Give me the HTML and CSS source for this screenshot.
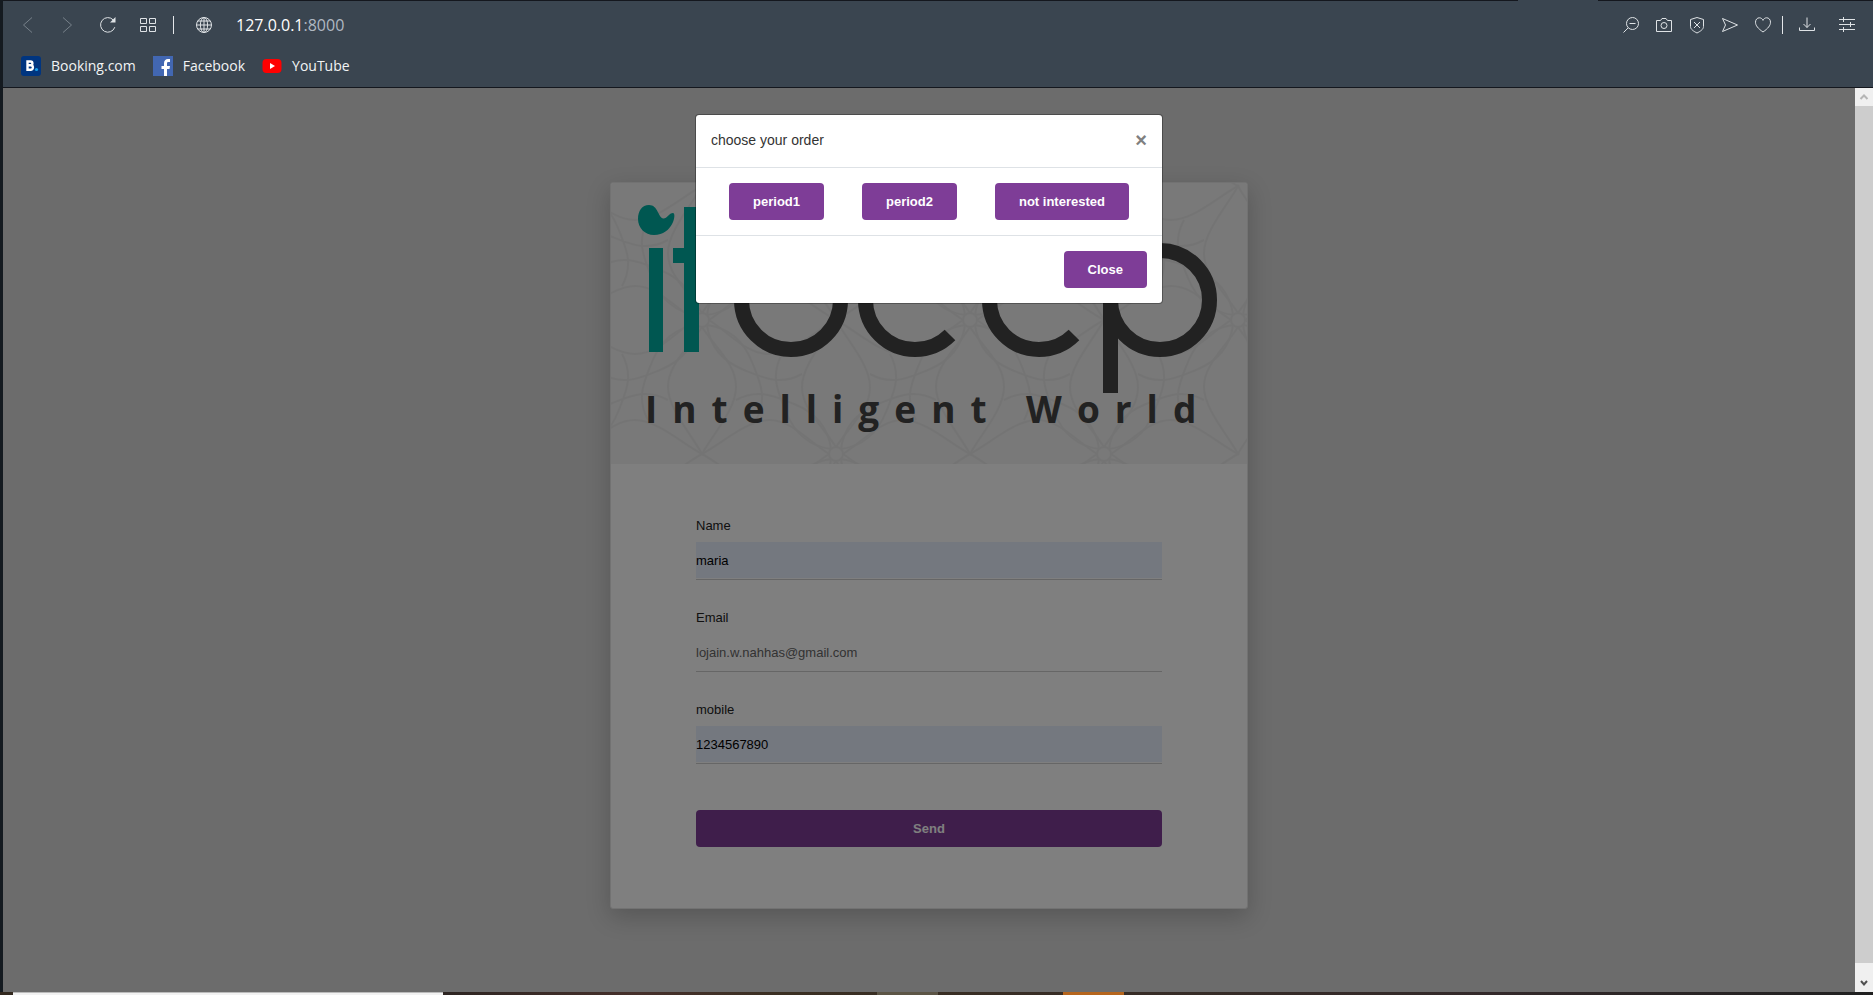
FILE: index.html
```html
<!DOCTYPE html>
<html lang="en">
<head>
<meta charset="utf-8">
<title>127.0.0.1:8000</title>
<link rel="stylesheet" href="styles.css">
</head>
<body>
<header class="chrome">
  <nav class="toolbar" aria-label="Browser">
    <div class="nav-group">
      <button class="icon-btn dim" aria-label="Back"><svg viewBox="0 0 16 16"><path d="M12 0.5L3.500 8l8.500 7.500"/></svg></button>
      <button class="icon-btn dim" aria-label="Forward"><svg viewBox="0 0 16 16"><path d="M3 .5L11.500 8 3 15.500"/></svg></button>
      <button class="icon-btn" aria-label="Reload"><svg viewBox="0 0 16 16"><path d="M14.800 10.200A7.300 7.300 0 1 1 13.300 3"/><path class="solid" d="M15.500 0v5.500H10z"/></svg></button>
      <button class="icon-btn" aria-label="Speed dial"><svg viewBox="0 0 16 16"><path d="M.5 1.500h6v5h-6zM9.500 1.500h6v5h-6zM.5 9.500h6v5h-6zM9.500 9.500h6v5h-6z"/></svg></button>
    </div>
    <span class="divider"></span>
    <div class="address">
      <button class="icon-btn" aria-label="Site information"><svg viewBox="0 0 16 16"><circle cx="8" cy="8" r="7.500"/><ellipse cx="8" cy="8" rx="3.600" ry="7.500"/><path d="M8 .5v15M.5 8h15M1.800 4h12.400M1.800 12h12.400"/></svg></button>
      <span class="url">127.0.0.1<span class="port">:8000</span></span>
    </div>
    <div class="tools">
      <button class="icon-btn" aria-label="Zoom out"><svg viewBox="0 0 16 16"><circle cx="9.500" cy="6.500" r="6"/><path d="M6.500 6.500h6M5.200 10.800L.5 15.500"/></svg></button>
      <button class="icon-btn" aria-label="Snapshot"><svg viewBox="0 0 16 16"><path d="M.5 3.500h4l1.500-2h4l1.500 2h4v11H.5z"/><circle cx="8" cy="8.500" r="3"/></svg></button>
      <button class="icon-btn" aria-label="Blocker"><svg viewBox="0 0 16 16"><path d="M8 .5l6.500 2v7c0 3-3.500 5-6.500 6.500C5 14.500 1.500 12.500 1.500 9.500v-7zM5 5l6 6M11 5l-6 6"/></svg></button>
      <button class="icon-btn" aria-label="Send to flow"><svg viewBox="0 0 16 16"><path d="M.5 1.500L15.500 8 .5 14.500 3.500 8z"/></svg></button>
      <button class="icon-btn" aria-label="Bookmark"><svg viewBox="0 0 16 16"><path d="M8 15C3 11.500.5 8.500.5 5.200.5 2.500 2.300.8 4.300.8 6 .8 7.400 1.800 8 3.400 8.600 1.800 10 .8 11.700.8c2 0 3.800 1.700 3.800 4.400C15.500 8.500 13 11.500 8 15z"/></svg></button>
    </div>
    <span class="divider"></span>
    <div class="menu-tools">
      <button class="icon-btn" aria-label="Downloads"><svg viewBox="0 0 16 16"><path d="M8 .5v10M4.500 7L8 10.500 11.500 7M.5 10.500v3h15v-3"/></svg></button>
      <button class="icon-btn" aria-label="Easy setup"><svg viewBox="0 0 16 16"><path d="M0 2.500h16M0 7.500h16M0 12.500h16M4.500 0v5M11.500 5v5M4.500 10v5"/></svg></button>
    </div>
  </nav>
  <nav class="bookmarks" aria-label="Bookmarks">
    <a href="#"><svg viewBox="0 0 20 20"><rect width="20" height="20" rx="3" fill="#003580"/><path d="M6.500 5.500h3a1.800 1.800 0 0 1 0 3.800h-3zM6.500 9.300h3.200a2.200 2.200 0 0 1 0 4.400H6.500z" fill="none" stroke="#fff" stroke-width="2.400"/><circle cx="15.500" cy="13.500" r="1.600" fill="#1ba0e8"/></svg>Booking.com</a>
    <a href="#"><svg viewBox="0 0 20 20"><rect width="20" height="20" fill="#4267b2"/><path d="M11 20v-7H8.500v-3H11V7.500C11 4.500 12.500 3 15 3h2v3h-1.500C14.200 6 14 6.700 14 7.600V10h3l-.5 3H14v7z" fill="#fff"/></svg>Facebook</a>
    <a href="#"><svg viewBox="0 0 20 20"><rect x=".5" y="3" width="19" height="14" rx="4" fill="#f00"/><path d="M8 7l5 3-5 3z" fill="#fff"/></svg>YouTube</a>
  </nav>
</header>

<div class="viewport">
  <div class="page">
    <main class="content">
      <section class="card">
        <svg class="banner" viewBox="0 0 636 281" role="img" aria-label="itoccp Intelligent World">
          <defs>
            <g id="flower">
              <circle r="7"/>
              <path d="M0-7C-15-30-34-45-34-67S-10-115 0-134C10-115 34-90 34-67S15-30 0-7"/>
              <path d="M0 7C-15 30-34 45-34 67S-10 115 0 134C10 115 34 90 34 67S15 30 0 7"/>
              <path d="M-7 0C-30-15-45-34-67-34S-115-10-134 0C-115 10-90 34-67 34S-30 15-7 0"/>
              <path d="M7 0C30-15 45-34 67-34S115-10 134 0C115 10 90 34 67 34S30 15 7 0"/>
              <path d="M5 5C8 28 22 42 42 50S78 66 100 54M5 5C28 8 42 22 50 42S66 78 54 100M-5 5C-8 28-22 42-42 50S-78 66-100 54M-5 5C-28 8-42 22-50 42S-66 78-54 100M5-5C8-28 22-42 42-50S78-66 100-54M5-5C28-8 42-22 50-42S66-78 54-100M-5-5C-8-28-22-42-42-50S-78-66-100-54M-5-5C-28-8-42-22-50-42S-66-78-54-100"/>
            </g>
          </defs>
          <rect width="636" height="281" fill="#f2f2f2"/>
          <g fill="none" stroke="#e9e9e9" stroke-width="2">
            <use href="#flower" x="91" y="137"/><use href="#flower" x="359" y="137"/><use href="#flower" x="627" y="137"/>
            <use href="#flower" x="-43" y="271"/><use href="#flower" x="225" y="271"/><use href="#flower" x="493" y="271"/>
            <use href="#flower" x="-43" y="3"/><use href="#flower" x="225" y="3"/><use href="#flower" x="493" y="3"/>
          </g>
          <g fill="#00aea2">
            <path d="M27 36C27 28 31 22 38 22C47 22 47 34 52 35.500C56 36 58 30 62 30C66 30 62 52 43 52C34 52 27 45 27 36z"/>
            <path d="M38 65h14v104H38zM73 24h15v41h14v15H88v89H73V80H62V65h11z"/>
          </g>
          <g fill="none" stroke="#444" stroke-width="15">
            <circle cx="180" cy="117" r="49.500"/>
            <path d="M339 152A49.500 49.500 0 1 1 339 82M463 152A49.500 49.500 0 1 1 463 82"/>
            <circle cx="549" cy="117" r="49.500"/>
            <path d="M499.500 117v93"/>
          </g>
          <text class="tagline" x="34" y="240">Intelligent World</text>
        </svg>
        <form class="form">
          <div class="field"><label for="name">Name</label><div class="control"><input class="filled" id="name" type="text" value="maria"></div></div>
          <div class="field"><label for="email">Email</label><div class="control"><input id="email" type="email" value="lojain.w.nahhas@gmail.com"></div></div>
          <div class="field"><label for="mobile">mobile</label><div class="control"><input class="filled" id="mobile" type="tel" value="1234567890"></div></div>
          <button class="btn send" type="button">Send</button>
        </form>
      </section>
    </main>
    <div class="backdrop">
      <div class="modal" role="dialog" aria-labelledby="modal-title">
        <div class="modal-header">
          <h1 id="modal-title">choose your order</h1>
          <button class="dismiss" aria-label="Dismiss">×</button>
        </div>
        <div class="modal-body">
          <button class="btn">period1</button>
          <button class="btn">period2</button>
          <button class="btn">not interested</button>
        </div>
        <div class="modal-footer"><button class="btn">Close</button></div>
      </div>
    </div>
  </div>
  <div class="scrollbar">
    <svg class="arrow up" viewBox="0 0 18 18"><path d="M5.500 11L9 7.500l3.500 3.500"/></svg>
    <div class="thumb"></div>
    <svg class="arrow down" viewBox="0 0 18 18"><path d="M6 7l3 3.500L12 7"/></svg>
  </div>
</div>
<footer class="taskbar"><span class="search"></span><span class="task idle"></span><span class="task active"></span></footer>
</body>
</html>
```
FILE: styles.css
```css
* { box-sizing: border-box; }

body {
  margin: 0;
  height: 100vh;
  display: flex;
  flex-direction: column;
  overflow: hidden;
  background: #141a20;
  font-family: "Liberation Sans", Arial, sans-serif;
}

button { border: 0; padding: 0; font: inherit; cursor: pointer; }

/* Browser chrome */
.chrome {
  margin-left: 3px;
  padding: 1px 0 4px;
  background:
    linear-gradient(to left, #14171e 275px, transparent 275px, transparent 355px, #14171e 355px) top / 100% 1px no-repeat,
    #3a4550;
  border-bottom: 1px solid #14171e;
  font-family: "Open Sans", "Noto Sans", sans-serif;
  color: #fff;
}

.toolbar {
  display: flex;
  align-items: center;
  height: 48px;
  padding: 0 18px 0 17px;
}

.icon-btn { width: 16px; height: 16px; background: none; color: #dfe3e6; }
.icon-btn svg { display: block; fill: none; stroke: currentColor; overflow: visible; }
.icon-btn .solid { fill: currentColor; stroke: none; }
.icon-btn.dim { color: #77818a; }
.nav-group { display: flex; gap: 24px; }
.divider { width: 1px; height: 18px; margin-left: 17px; background: #e4e7ea; }
.address { display: flex; flex: 1; align-items: center; gap: 24px; margin-left: 22px; }
.url { font-size: 16px; line-height: 24px; }
.port { color: #b0b8c2; }
.tools { display: flex; gap: 17px; }
.tools + .divider { margin-left: 11px; }
.menu-tools { display: flex; gap: 24px; margin-left: 16px; }

.bookmarks {
  display: flex;
  align-items: center;
  gap: 17px;
  height: 34px;
  padding-left: 18px;
}

.bookmarks a {
  display: flex;
  align-items: center;
  gap: 10px;
  color: #f2f4f5;
  font-size: 14px;
  line-height: 20px;
  text-decoration: none;
}

.bookmarks svg { width: 20px; height: 20px; }

/* Page area */
.viewport { display: flex; flex: 1; min-height: 0; margin-left: 3px; }
.page { position: relative; flex: 1; overflow: hidden; background: #d8d8d8; }
.content { display: flex; justify-content: center; padding-top: 94px; }

.card {
  width: 100%;
  max-width: 638px;
  overflow: hidden;
  background: #fff;
  border: 1px solid #e4e4e4;
  border-radius: 3px;
  box-shadow: 0 8px 24px rgba(0, 0, 0, 0.2);
}

.banner { display: block; width: 100%; }

.tagline {
  fill: #444;
  font: bold 37px "Open Sans", "Noto Sans", sans-serif;
  letter-spacing: 15px;
}

.form { padding: 52px 85px 61px; }
.field { display: flex; flex-direction: column; gap: 6px; margin-bottom: 28px; }
.field label { color: #222; font-size: 13px; line-height: 20px; }
.control { padding-bottom: 1px; border-bottom: 1px solid #ccc; }

.control input {
  display: block;
  width: 100%;
  height: 36px;
  padding: 0;
  border: 0;
  background: transparent;
  color: #666;
  font: 13px "Liberation Sans", Arial, sans-serif;
}

.control .filled { background: #e8f0fe; color: #000; }

.btn {
  height: 37px;
  padding: 0 24px;
  border-radius: 4px;
  background: #7e3d97;
  color: #fff;
  font-size: 13px;
  font-weight: bold;
}

.send { display: block; width: 100%; margin-top: 46px; }

/* Dialog */
.backdrop {
  position: absolute;
  inset: 0;
  display: flex;
  justify-content: center;
  align-items: flex-start;
  padding-top: 26px;
  background: rgba(0, 0, 0, 0.5);
}

.modal {
  width: 100%;
  max-width: 468px;
  background: #fff;
  background-clip: padding-box;
  border: 1px solid rgba(0, 0, 0, 0.3);
  border-radius: 4px;
}

.modal-header {
  display: flex;
  justify-content: space-between;
  align-items: flex-start;
  height: 53px;
  padding: 15px;
  border-bottom: 1px solid #dee2e6;
}

.modal-header h1 { margin: 0; color: #333; font-size: 14px; font-weight: normal; line-height: 21px; }
.dismiss { width: 12px; background: none; color: #808080; font-size: 20px; font-weight: bold; line-height: 20px; }
.modal-body { display: flex; justify-content: center; gap: 38px; padding: 15px; border-bottom: 1px solid #dee2e6; }
.modal-footer { display: flex; justify-content: flex-end; padding: 15px; }

/* Scrollbar */
.scrollbar { display: flex; flex-direction: column; width: 18px; background: #f0f0f0; }
.thumb { flex: 1; margin-bottom: 11px; background: #cdcdcd; }
.arrow { width: 18px; height: 18px; fill: none; stroke-width: 2; }
.up { stroke: #b5b5b5; }
.down { stroke: #505050; }

/* Taskbar sliver */
.taskbar {
  display: flex;
  height: 3px;
  padding-left: 13px;
  background: linear-gradient(to right, #33291f, #2e2522 24%, #46302b 34%, #3a2f22 42%, #33292a 80%, #202020);
}

.search { width: 430px; background: #f2f2f2; border-top: 1px solid #bbb; }
.task { width: 61px; }
.idle { margin-left: 434px; background: #5c5546; }
.active { margin-left: 125px; background: #b5651d; }
```
